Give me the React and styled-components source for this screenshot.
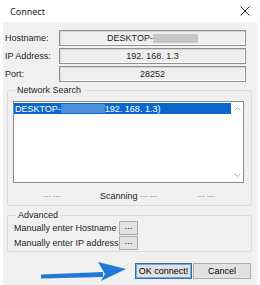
import React from 'react';
import styled, { createGlobalStyle } from 'styled-components';

const GlobalStyle = createGlobalStyle`
  html, body {
    margin: 0;
    padding: 0;
    background: #ffffff;
  }
  body {
    font-family: "Liberation Sans", Arial, sans-serif;
    font-size: 9px;
    color: #1e1e1e;
  }
`;

const Window = styled.div`
  width: 260px;
  height: 285px;
  display: flex;
  flex-direction: column;
  overflow: hidden;
  background: #ffffff;
`;

const TitleBar = styled.div`
  height: 22px;
  flex: none;
  display: flex;
  align-items: center;
  justify-content: space-between;
  padding: 0 10px 0 10px;
  font-family: "Noto Sans", "Open Sans", sans-serif;
  font-size: 9px;
  color: #1a1a1a;
`;

const Body = styled.div`
  flex: 1;
  margin: 0 3px;
  background: #f0f0f0;
  padding: 8px 3px 0 2px;
  display: flex;
  flex-direction: column;
`;

const Fields = styled.div`
  display: grid;
  grid-template-columns: 54px 187px;
  row-gap: 2px;
  align-items: center;
`;

const Label = styled.span`
  font-size: 9px;
`;

const ValueBox = styled.div`
  height: 16px;
  box-sizing: border-box;
  border: 1px solid #8f8f8f;
  box-shadow: inset 1px 1px 0 #d4d4d4, inset -1px -1px 0 #ffffff;
  background: #eeeeee;
  display: flex;
  align-items: center;
  justify-content: center;
  font-size: 9px;
`;

const Redacted = styled.span`
  display: inline-block;
  width: ${p => p.$w}px;
  height: 9px;
  background: ${p => p.$color};
`;

const Group = styled.fieldset`
  margin: ${p => p.$top}px 2px 0 2px;
  padding: ${p => p.$pad};
  border: 1px solid #dcdcdc;
  border-radius: 2px;
  min-width: 0;
`;

const Legend = styled.legend`
  padding: 0 2px;
  margin-left: 2px;
  font-size: 9px;
  line-height: 10px;
`;

const ListBox = styled.div`
  height: 82px;
  box-sizing: border-box;
  border: 1px solid #8a8a8a;
  background: #ffffff;
  display: flex;
  margin-top: 6px;
`;

const ListItems = styled.div`
  flex: 1;
`;

const ListItem = styled.div`
  height: 11px;
  display: flex;
  align-items: center;
  background: ${p => (p.$selected ? '#0a68cc' : 'transparent')};
  color: ${p => (p.$selected ? '#ffffff' : '#000')};
  padding-left: 1px;
  font-size: 9px;
  margin-top: 1px;
`;

const ScrollBar = styled.div`
  width: 12px;
  display: flex;
  flex-direction: column;
  justify-content: space-between;
  align-items: center;
  padding: 5px 0 5px;
`;

const ScanRow = styled.div`
  display: grid;
  grid-template-columns: 1fr 1fr 1fr;
  padding: 6px 0 0;
  height: 13px;
  align-items: center;
  text-align: center;
  font-size: 9px;
`;

const Dots = styled.span`
  color: #7a7a7a;
  letter-spacing: -0.5px;
`;

const AdvRow = styled.div`
  display: flex;
  align-items: center;
  height: 14px;
  margin-top: ${p => p.$gap}px;
`;

const AdvLabel = styled.span`
  width: 105px;
  font-size: 9px;
`;

const SmallButton = styled.button`
  width: 19px;
  height: 14px;
  padding: 0 0 3px;
  box-sizing: border-box;
  border: 1px solid #adadad;
  background: #e1e1e1;
  font-family: "Liberation Sans", Arial, sans-serif;
  font-size: 9px;
  line-height: 9px;
  color: #000;
`;

const ButtonRow = styled.div`
  display: flex;
  align-items: center;
  justify-content: flex-end;
  margin-top: 8px;
  padding-right: 3px;
`;

const DialogButton = styled.button`
  width: ${p => p.$w}px;
  height: 16px;
  box-sizing: border-box;
  padding: 0;
  margin-left: ${p => p.$ml}px;
  border: 1px solid ${p => (p.$primary ? '#2f6fb0' : '#adadad')};
  box-shadow: ${p => (p.$primary ? 'inset 0 0 0 1px #7aa9d6' : 'none')};
  background: #e1e1e1;
  font-family: "Liberation Sans", Arial, sans-serif;
  font-size: 9px;
  color: #000;
`;

function CloseIcon() {
  return (
    <svg width="10" height="10" viewBox="0 0 10 10">
      <path d="M0.5 0.5 L9.5 9.5 M9.5 0.5 L0.5 9.5" stroke="#222" strokeWidth="1" fill="none" />
    </svg>
  );
}

function Arrow() {
  return (
    <svg width="86" height="22" viewBox="0 0 86 22" style={{ marginRight: 8 }}>
      <path d="M0 14.5 L62 12 L62 17 L0 18.5 Z" fill="#1e7ad6" />
      <path d="M57 2 L85 9 L60 21 L64 14 Z" fill="#1e7ad6" />
    </svg>
  );
}

function Chevron({ down }) {
  return (
    <svg width="7" height="4" viewBox="0 0 7 4">
      <path d={down ? 'M0.5 0.5 L3.5 3.5 L6.5 0.5' : 'M0.5 3.5 L3.5 0.5 L6.5 3.5'} stroke="#b4b4b4" fill="none" />
    </svg>
  );
}

export default function App() {
  return (
    <>
      <GlobalStyle />
      <Window>
        <TitleBar>
          <span>Connect</span>
          <CloseIcon />
        </TitleBar>
        <Body>
          <Fields>
            <Label>Hostname:</Label>
            <ValueBox>
              DESKTOP-<Redacted $w={45} $color="#c6c6c6" />
            </ValueBox>
            <Label>IP Address:</Label>
            <ValueBox>192. 168. 1.3</ValueBox>
            <Label>Port:</Label>
            <ValueBox>28252</ValueBox>
          </Fields>

          <Group $top={3} $pad="0 7px 3px 5px">
            <Legend>Network Search</Legend>
            <ListBox>
              <ListItems>
                <ListItem $selected>
                  DESKTOP-<Redacted $w={44} $color="#4a8fd8" />192. 168. 1.3)
                </ListItem>
              </ListItems>
              <ScrollBar>
                <Chevron />
                <Chevron down />
              </ScrollBar>
            </ListBox>
            <ScanRow>
              <Dots>··· ···</Dots>
              <span>Scanning <Dots>··· ···</Dots></span>
              <Dots>··· ···</Dots>
            </ScanRow>
          </Group>

          <Group $top={4} $pad="0 6px 1px 6px">
            <Legend>Advanced</Legend>
            <AdvRow $gap={1}>
              <AdvLabel>Manually enter Hostname</AdvLabel>
              <SmallButton>...</SmallButton>
            </AdvRow>
            <AdvRow $gap={1}>
              <AdvLabel>Manually enter IP address</AdvLabel>
              <SmallButton>...</SmallButton>
            </AdvRow>
          </Group>

          <ButtonRow>
            <Arrow />
            <DialogButton $primary $w={57} $ml={0}>OK connect!</DialogButton>
            <DialogButton $w={58} $ml={1}>Cancel</DialogButton>
          </ButtonRow>
        </Body>
      </Window>
    </>
  );
}
